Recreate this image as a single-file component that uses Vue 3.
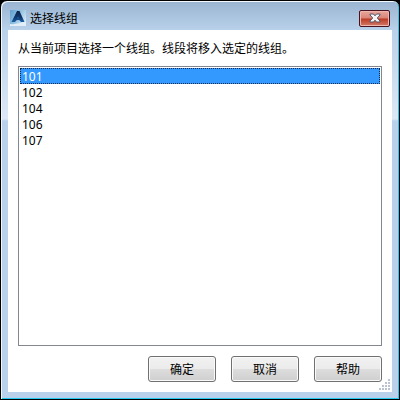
<script setup>
import { ref } from 'vue';

const groups = ['101', '102', '104', '106', '107'];
const selected = ref('101');
const visible = ref(true);

function confirm() {
    console.log('selected', selected.value);
    visible.value = false;
}

function cancel() {
    visible.value = false;
}

function help() {
    console.log('help');
}
</script>

<template>
  <div v-if="visible" class="window" role="dialog" aria-labelledby="dialog-title">
    <header class="title-bar">
      <svg class="app-icon" viewBox="0 0 16 16" aria-hidden="true">
        <defs>
          <linearGradient id="icon-bg" x1="0" y1="0" x2="1" y2="0.6">
            <stop offset="0" stop-color="#5c9fd0" />
            <stop offset="0.5" stop-color="#8fbfe0" />
            <stop offset="1" stop-color="#d3e6f3" />
          </linearGradient>
          <linearGradient id="icon-a" x1="0" y1="0" x2="0" y2="1">
            <stop offset="0" stop-color="#0c2547" />
            <stop offset="0.6" stop-color="#0f3a72" />
            <stop offset="1" stop-color="#1b5fa6" />
          </linearGradient>
        </defs>
        <rect width="16" height="16" fill="url(#icon-bg)" />
        <path d="M0 16V14Q8 15 16 11V16Z" fill="#e2eff8" />
        <path d="M7 1H9.500L14.500 12H11L9.500 10.300Q8 9.600 6.500 10.300L5 12H1.500Z" fill="url(#icon-a)" />
        <path d="M8 6.500L8.800 8.500H7.200Z" fill="#2f6ca8" />
      </svg>
      <h1 id="dialog-title" class="title">选择线组</h1>
      <button class="close" type="button" aria-label="关闭" @click="cancel">
        <svg viewBox="0 0 12 10" aria-hidden="true">
          <path d="M1 1H4.500L6 2.800L7.500 1H11V2L8.300 5L11 8V9H7.500L6 7.200L4.500 9H1V8L3.700 5L1 2Z" fill="#f4f4f4" stroke="#535666" stroke-width="1" />
        </svg>
      </button>
    </header>
    <!-- 对话框内容 -->
    <main class="content">
      <label class="prompt" for="group-list">从当前项目选择一个线组。线段将移入选定的线组。</label>
      <select id="group-list" v-model="selected" class="group-list" size="17">
        <option v-for="item in groups" :key="item" :value="item">{{ item }}</option>
      </select>
      <footer class="actions">
        <button class="btn" type="button" @click="confirm">确定</button>
        <button class="btn" type="button" @click="cancel">取消</button>
        <button class="btn" type="button" @click="help">帮助</button>
      </footer>
      <svg class="grip" viewBox="0 0 11 11" aria-hidden="true">
        <path d="M9 0h2v2h-2zM6 3h2v2h-2zM9 3h2v2h-2zM3 6h2v2h-2zM6 6h2v2h-2zM9 6h2v2h-2zM0 9h2v2h-2zM3 9h2v2h-2zM6 9h2v2h-2zM9 9h2v2h-2z" fill="#b9c3d3" />
      </svg>
    </main>
  </div>
</template>

<style>
  html,
  body,
  #app {
      height: 100%;
  }

  body {
      margin: 0;
      background: #000;
  }
</style>

<style scoped>
  .window {
      box-sizing: border-box;
      display: flex;
      flex-direction: column;
      height: 100%;
      padding: 0 6px 6px;
      border: 1px solid #000;
      border-radius: 7px 7px 0 0;
      background: linear-gradient(#99b4d1, #b9d1ea 29px, #dce8f5 118px, #b9d1ea 120px);
      box-shadow: inset 1px 1px 0 #f2f7fc, inset -1px -1px 0 #25c8ee;
      color: #000;
      font-family: "Noto Sans", "Noto Sans CJK SC", sans-serif;
      font-size: 12px;
      line-height: 16px;
  }

  .title-bar {
      display: flex;
      align-items: center;
      gap: 4px;
      height: 29px;
      padding: 5px 3px 0;
      box-sizing: border-box;
  }

  .app-icon {
      width: 16px;
      height: 16px;
  }

  .title {
      flex: 1;
      margin: 0;
      font-size: 12px;
      font-weight: normal;
      font-family: "Noto Sans CJK SC", sans-serif;
  }

  .close {
      display: flex;
      align-items: center;
      justify-content: center;
      width: 31px;
      height: 17px;
      padding: 0;
      border: 1px solid #471321;
      border-radius: 2px;
      background: linear-gradient(#e8a79d, #d98477 48%, #bc3a24 52%, #d27b68);
      box-shadow: inset 0 0 0 1px #eeb6ad;
  }

  .close svg {
      width: 12px;
      height: 10px;
  }

  .content {
      position: relative;
      display: flex;
      flex: 1;
      flex-direction: column;
      min-height: 0;
      margin: 0 1px 1px;
      padding: 10px;
      box-sizing: border-box;
      background: #fff;
  }

  .prompt {
      margin-bottom: 10px;
      font-family: "Noto Sans CJK SC", sans-serif;
  }

  .group-list {
      flex: 1;
      min-height: 0;
      margin: 0;
      padding: 1px;
      border: 1px solid #828790;
      border-radius: 0;
      outline: none;
      background: #fff;
      color: #000;
      font: inherit;
      overflow-y: auto;
  }

  .group-list option {
      box-sizing: border-box;
      height: 16px;
      min-height: 16px;
      padding: 0 2px;
      line-height: 16px;
  }

  .group-list option:checked {
      background: #39f linear-gradient(#39f, #39f);
      outline: 1px dotted #0a2a52;
      outline-offset: -1px;
      color: #fff;
      -webkit-text-fill-color: #fff;
  }

  .actions {
      display: flex;
      justify-content: flex-end;
      gap: 15px;
      margin-top: 10px;
  }

  .btn {
      width: 68px;
      height: 26px;
      padding: 0;
      border: 1px solid #707070;
      border-radius: 3px;
      background: linear-gradient(#f2f2f2, #ebebeb 50%, #ddd 50%, #cfcfcf);
      box-shadow: inset 0 0 0 1px #fafafa;
      color: #000;
      font-family: "Noto Sans CJK SC", sans-serif;
      font-size: 12px;
      line-height: 16px;
  }

  .grip {
      position: absolute;
      right: 2px;
      bottom: 2px;
      width: 11px;
      height: 11px;
  }
</style>
